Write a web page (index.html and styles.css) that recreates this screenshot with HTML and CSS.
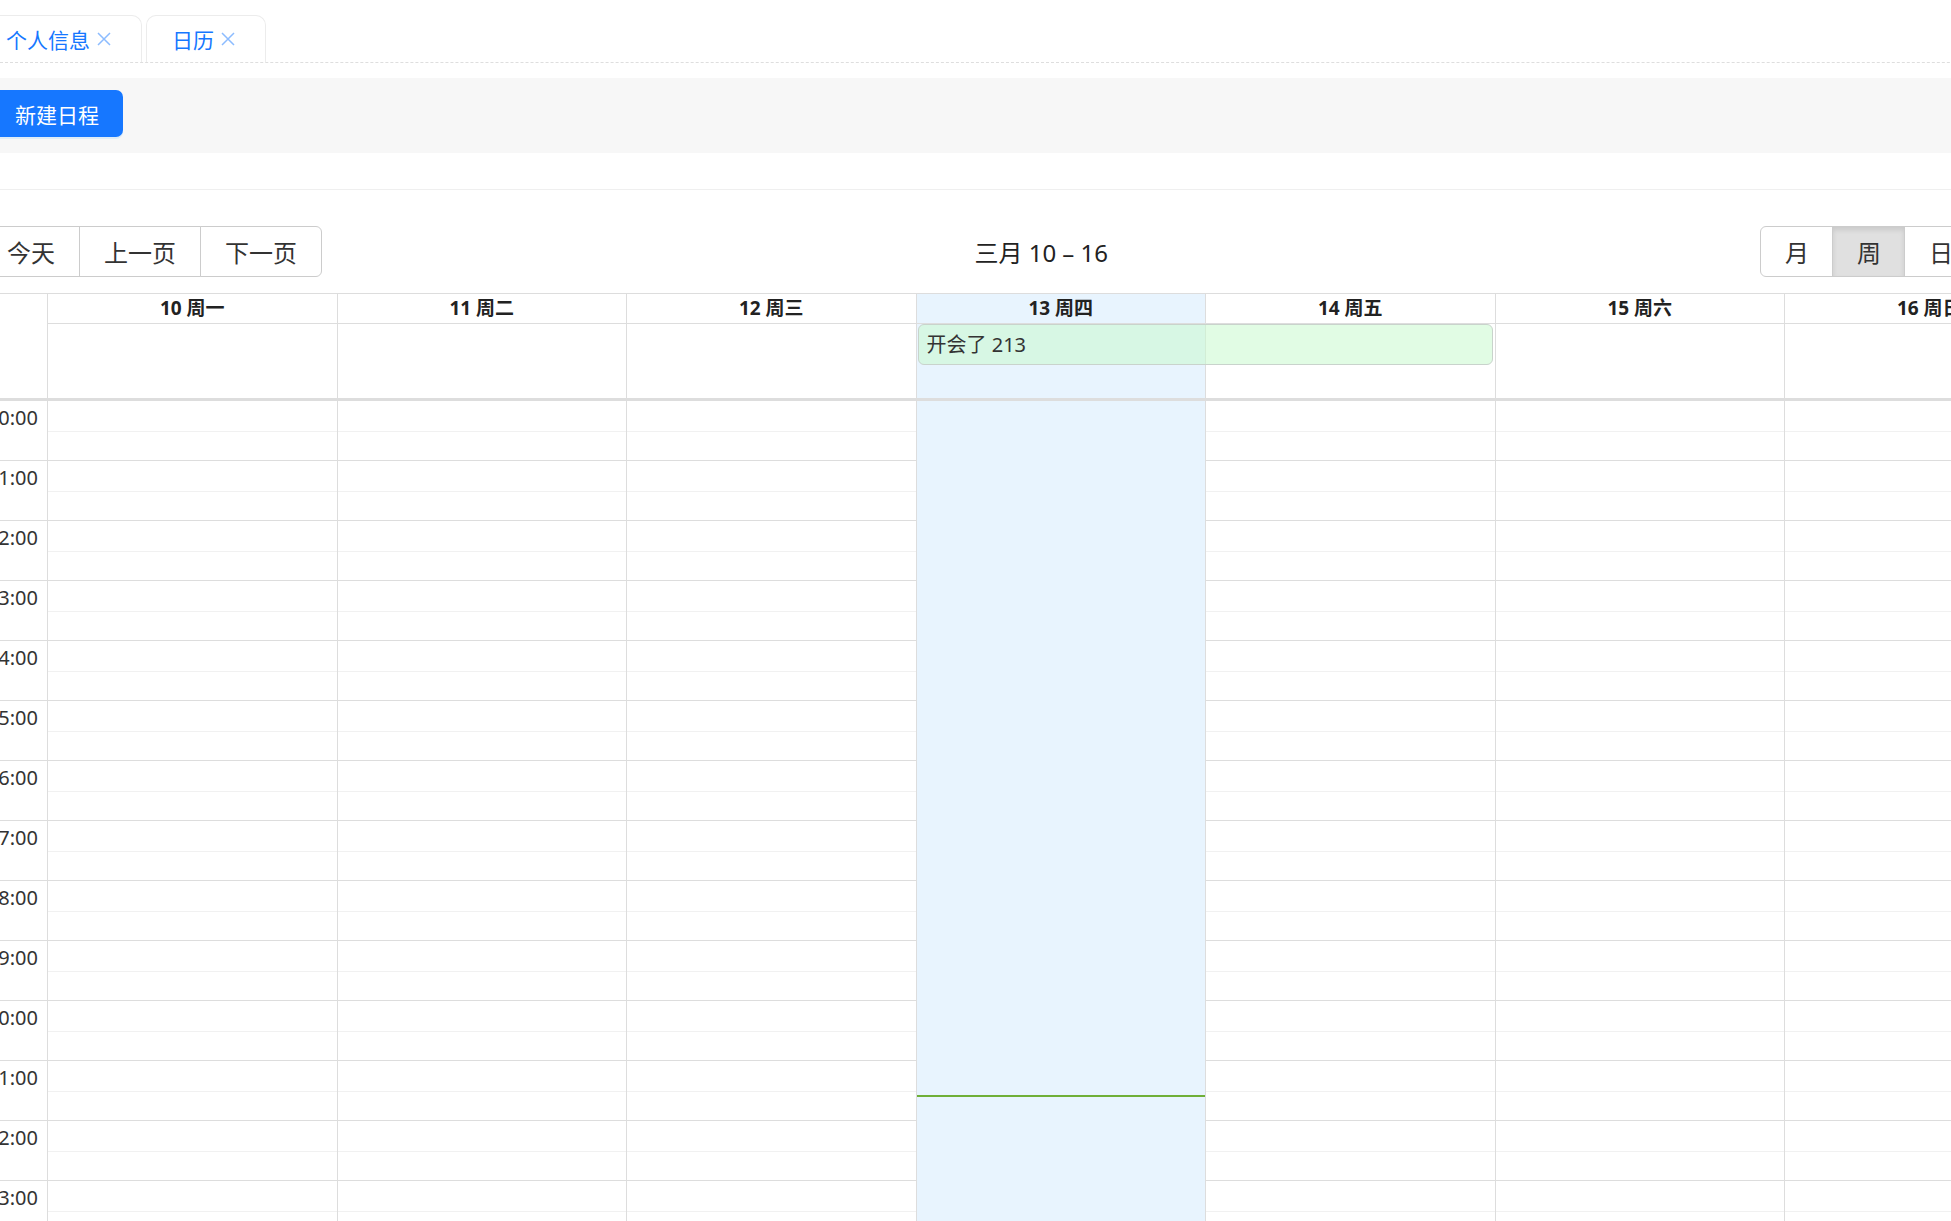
FILE: index.html
```html
<!DOCTYPE html>
<html lang="zh-CN">
<head>
<meta charset="utf-8">
<title>日历</title>
<link rel="stylesheet" href="styles.css">
</head>
<body>
<div class="page">
  <div class="tabbar">
    <div class="tab">个人信息<svg class="tab-x" viewBox="0 0 14 14"><path d="M1 1L13 13M13 1L1 13"/></svg></div>
    <div class="tab">日历<svg class="tab-x" viewBox="0 0 14 14"><path d="M1 1L13 13M13 1L1 13"/></svg></div>
  </div>
  <div class="actions">
    <button class="btn-primary">新建日程</button>
  </div>
  <div class="card">
    <div class="toolbar">
      <div class="btn-group">
        <button class="fc-btn">今天</button>
        <button class="fc-btn">上一页</button>
        <button class="fc-btn">下一页</button>
      </div>
      <h2 class="title">三月 10 – 16</h2>
      <div class="btn-group views">
        <button class="fc-btn">月</button>
        <button class="fc-btn active">周</button>
        <button class="fc-btn">日</button>
        <button class="fc-btn">列表</button>
      </div>
    </div>
    <div class="head">
      <div class="axis-cell"></div>
      <div class="dh c2">10 周一</div>
      <div class="dh c3">11 周二</div>
      <div class="dh c4">12 周三</div>
      <div class="dh c5 today">13 周四</div>
      <div class="dh c6">14 周五</div>
      <div class="dh c7">15 周六</div>
      <div class="dh c8">16 周日</div>
      <div class="ad c2"></div>
      <div class="ad c3"></div>
      <div class="ad c4"></div>
      <div class="ad c5 today"></div>
      <div class="ad c6"></div>
      <div class="ad c7"></div>
      <div class="ad c8"></div>
      <div class="event">开会了 213</div>
    </div>
    <div class="tg">
      <div class="cols">
        <div class="col-axis"></div>
        <div class="col"></div>
        <div class="col"></div>
        <div class="col"></div>
        <div class="col today"><div class="now"></div></div>
        <div class="col"></div>
        <div class="col"></div>
        <div class="col"></div>
      </div>
      <div class="slots">
        <div class="hr"><div class="lbl">00:00</div><div class="half"></div></div>
        <div class="hr"><div class="lbl">01:00</div><div class="half"></div></div>
        <div class="hr"><div class="lbl">02:00</div><div class="half"></div></div>
        <div class="hr"><div class="lbl">03:00</div><div class="half"></div></div>
        <div class="hr"><div class="lbl">04:00</div><div class="half"></div></div>
        <div class="hr"><div class="lbl">05:00</div><div class="half"></div></div>
        <div class="hr"><div class="lbl">06:00</div><div class="half"></div></div>
        <div class="hr"><div class="lbl">07:00</div><div class="half"></div></div>
        <div class="hr"><div class="lbl">08:00</div><div class="half"></div></div>
        <div class="hr"><div class="lbl">09:00</div><div class="half"></div></div>
        <div class="hr"><div class="lbl">10:00</div><div class="half"></div></div>
        <div class="hr"><div class="lbl">11:00</div><div class="half"></div></div>
        <div class="hr"><div class="lbl">12:00</div><div class="half"></div></div>
        <div class="hr"><div class="lbl">13:00</div><div class="half"></div></div>
        <div class="hr"><div class="lbl">14:00</div><div class="half"></div></div>
        <div class="hr"><div class="lbl">15:00</div><div class="half"></div></div>
        <div class="hr"><div class="lbl">16:00</div><div class="half"></div></div>
        <div class="hr"><div class="lbl">17:00</div><div class="half"></div></div>
        <div class="hr"><div class="lbl">18:00</div><div class="half"></div></div>
        <div class="hr"><div class="lbl">19:00</div><div class="half"></div></div>
        <div class="hr"><div class="lbl">20:00</div><div class="half"></div></div>
        <div class="hr"><div class="lbl">21:00</div><div class="half"></div></div>
        <div class="hr"><div class="lbl">22:00</div><div class="half"></div></div>
        <div class="hr"><div class="lbl">23:00</div><div class="half"></div></div>
      </div>
    </div>
  </div>
</div>
</body>
</html>
```

FILE: styles.css
```css
html, body {
  margin: 0;
  padding: 0;
  overflow: hidden;
  background: #fff;
}
body {
  font-family: "Noto Sans", "Noto Sans CJK SC", sans-serif;
  color: #333;
}
.page {
  margin-left: -20px;
  width: 2120px;
}

/* tabs */
.tabbar {
  display: flex;
  gap: 4px;
  height: 47px;
  padding-top: 15px;
  border-bottom: 1px dashed #dedede;
}
.tab {
  box-sizing: border-box;
  height: 47px;
  display: flex;
  align-items: center;
  gap: 7px;
  padding: 0 30px 0 25px;
  border: 1px solid #ececec;
  border-bottom: none;
  border-radius: 10px 10px 0 0;
  background: #fff;
  color: #1677ff;
  font-size: 21px;
}
.tab-x {
  width: 14px;
  height: 14px;
  fill: none;
  stroke: #8cbcff;
  stroke-width: 1.5;
}

/* action band */
.actions {
  box-sizing: border-box;
  margin-top: 15px;
  height: 75px;
  padding: 12px 0 0 11px;
  background: #f7f7f7;
}
.btn-primary {
  height: 47px;
  padding: 0 24px;
  border: none;
  border-radius: 7px;
  background: #1677ff;
  color: #fff;
  font-family: inherit;
  font-size: 21px;
  box-shadow: 0 2px 0 rgba(5, 145, 255, 0.1);
}

/* card */
.card {
  margin-top: 36px;
  border-top: 1px solid #efefef;
  padding: 36px 0 0 2px;
}
.toolbar {
  display: flex;
  align-items: center;
  justify-content: space-between;
  width: 2091.5px;
  height: 51px;
  margin-bottom: 16px;
}
.btn-group {
  display: flex;
}
.fc-btn {
  height: 51px;
  padding: 0 24px;
  margin-left: -1px;
  border: 1px solid #cccccc;
  background: #fff;
  color: #333;
  font-family: inherit;
  font-size: 24px;
}
.views .fc-btn {
  padding: 0 23.5px;
}
.fc-btn:first-child {
  margin-left: 0;
  border-radius: 6px 0 0 6px;
}
.fc-btn:last-child {
  border-radius: 0 6px 6px 0;
}
.fc-btn.active {
  background: #e0e0e0;
  box-shadow: inset 0 3px 5px rgba(0, 0, 0, 0.1);
}
.title {
  margin: 0;
  font-size: 24px;
  font-weight: 400;
  color: #222;
}

/* header + all-day */
.head {
  display: grid;
  grid-template-columns: 65px repeat(7, 289.5px);
  grid-template-rows: 30px 74px;
  width: 2091.5px;
  border-top: 1px solid #dddddd;
  border-bottom: 3px solid #dddddd;
}
.axis-cell {
  grid-row: 1 / 3;
  grid-column: 1;
}
.dh {
  grid-row: 1;
  box-sizing: border-box;
  border-left: 1px solid #dddddd;
  border-bottom: 1px solid #dddddd;
  text-align: center;
  font-size: 19px;
  font-weight: 700;
  line-height: 29px;
  color: #222;
}
.ad {
  grid-row: 2;
  border-left: 1px solid #dddddd;
}
.c2 { grid-column: 2; }
.c3 { grid-column: 3; }
.c4 { grid-column: 4; }
.c5 { grid-column: 5; }
.c6 { grid-column: 6; }
.c7 { grid-column: 7; }
.c8 { grid-column: 8; }
.today {
  background: #e8f4fe;
}
.event {
  grid-row: 2;
  grid-column: 5 / span 2;
  align-self: start;
  box-sizing: border-box;
  height: 41px;
  margin: 0 2px 0 2px;
  padding-left: 8px;
  border: 1px solid #c9d3cc;
  border-radius: 6px;
  background: rgba(200, 250, 205, 0.55);
  color: #333;
  font-size: 20px;
  line-height: 39px;
}

/* time grid */
.tg {
  display: grid;
  width: 2091.5px;
}
.tg > .cols,
.tg > .slots {
  grid-area: 1 / 1;
}
.cols {
  display: grid;
  grid-template-columns: 65px repeat(7, 289.5px);
  height: 1440px;
}
.col {
  position: relative;
  border-left: 1px solid #dddddd;
}
.now {
  position: absolute;
  left: 0;
  right: 0;
  top: 694px;
  border-top: 2px solid #6faf38;
}
.hr {
  box-sizing: border-box;
  height: 60px;
  display: grid;
  grid-template-columns: 65px 1fr;
  border-bottom: 1px solid #dddddd;
}
.lbl {
  padding: 2px 9px 0 0;
  text-align: right;
  font-size: 20px;
  line-height: 30px;
  color: #333;
}
.half {
  height: 30px;
  border-bottom: 1px solid rgba(230, 230, 230, 0.55);
}
```
